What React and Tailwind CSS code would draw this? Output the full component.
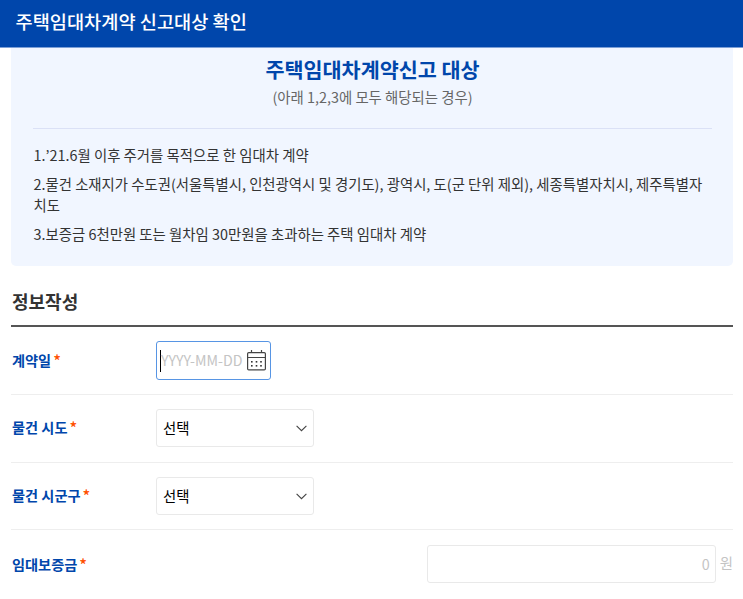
import React from "react";

const CalendarIcon = () => (
  <svg className="-mt-0.5 h-[22px] w-[19px] shrink-0" viewBox="0 0 19 22" fill="none" stroke="#444" strokeWidth="1.2">
    <rect x="0.6" y="3.6" width="17.8" height="17.3" rx="1.2" />
    <path d="M0.6 8.5H18.4M4.5 1V4M14.5 1V4" />
    <g fill="#333" stroke="none">
      <rect x="4" y="12" width="1.6" height="1.6" />
      <rect x="8.7" y="12" width="1.6" height="1.6" />
      <rect x="13.2" y="12" width="1.6" height="1.6" />
      <rect x="4" y="16" width="1.6" height="1.6" />
      <rect x="8.7" y="16" width="1.6" height="1.6" />
      <rect x="13.2" y="16" width="1.6" height="1.6" />
    </g>
  </svg>
);

const Label = ({ children }) => (
  <div className="flex w-[145px] shrink-0 pl-px text-[14.2px] font-bold leading-5 text-[#0046ab]">
    <span>{children}</span>
    <span className="-mt-0.5 ml-[2px] text-base font-medium text-[#ff5000]">*</span>
  </div>
);

const Select = () => (
  <div className="flex h-[38px] w-[158px] items-center justify-between rounded-[3px] border border-[#e9e9e9] pl-[6px] pr-[6px] text-black">
    <span>선택</span>
    <svg className="h-[7px] w-[11px]" viewBox="0 0 11 7" fill="none" stroke="#444" strokeWidth="1.1">
      <path d="M0.6 0.8L5.5 5.7L10.4 0.8" />
    </svg>
  </div>
);

export default function App() {
  return (
    <div className="h-[599px] w-full overflow-hidden bg-white font-['Noto_Sans_CJK_KR','Noto_Sans',sans-serif] text-[14.4px] text-[#333]">
      <header className="flex h-[47px] items-center bg-[#0046ab] px-[15.5px] pb-[5px]">
        <h1 className="text-[18.65px] font-medium text-white">주택임대차계약 신고대상 확인</h1>
      </header>
      <div className="h-px bg-[#7c9fd6]" />
      <main className="pl-[11px] pr-[10px]">
        <section className="h-[218px] rounded-b-[5px] bg-[#f1f6ff] pl-[22px] pr-[21px] pt-[5px]">
          <div className="h-[76px] border-b border-[#dbe1f6] text-center">
            <h2 className="text-[20.7px] font-bold leading-[33px] text-[#0046ab]">주택임대차계약신고 대상</h2>
            <p className="leading-[22px] text-[#666]">(아래 1,2,3에 모두 해당되는 경우)</p>
          </div>
          <ul className="flex flex-col gap-2 pl-[0.5px] pt-[15px] leading-[21px] break-all [font-kerning:none]">
            <li>1.’21.6월 이후 주거를 목적으로 한 임대차 계약</li>
            <li className="text-[14.38px]">2.물건 소재지가 수도권(서울특별시, 인천광역시 및 경기도), 광역시, 도(군 단위 제외), 세종특별자치시, 제주특별자치도</li>
            <li>3.보증금 6천만원 또는 월차임 30만원을 초과하는 주택 임대차 계약</li>
          </ul>
        </section>
        <h3 className="mt-5 h-[39px] pl-px text-[18px] font-bold leading-[31px]">정보작성</h3>
        <div className="h-[2px] bg-[#555]" />
        <div className="flex h-[68px] items-center border-b border-[#eee]">
          <Label>계약일</Label>
          <div className="flex h-[39px] w-[115px] items-center justify-between rounded-[3px] border border-[#5795e4] pl-[3px] pr-1">
            <div className="flex items-center text-[#c4c4c4]">
              <span className="h-[22px] w-px bg-black" />
              <span className="text-[14.2px]">YYYY-MM-DD</span>
            </div>
            <CalendarIcon />
          </div>
        </div>
        <div className="flex h-[68px] items-center border-b border-[#eee] pb-px">
          <Label>물건 시도</Label>
          <Select />
        </div>
        <div className="flex h-[67px] items-center border-b border-[#eee]">
          <Label>물건 시군구</Label>
          <Select />
        </div>
        <div className="flex h-[68px] items-center justify-between">
          <div className="pt-[2px]">
            <Label>임대보증금</Label>
          </div>
          <div className="flex items-center text-[#c4c4c4]">
            <div className="flex h-[38px] w-[289px] items-center justify-end rounded-[3px] border border-[#e9e9e9] pr-[5px]">0</div>
            <span className="-mt-0.5 ml-1">원</span>
          </div>
        </div>
      </main>
    </div>
  );
}
